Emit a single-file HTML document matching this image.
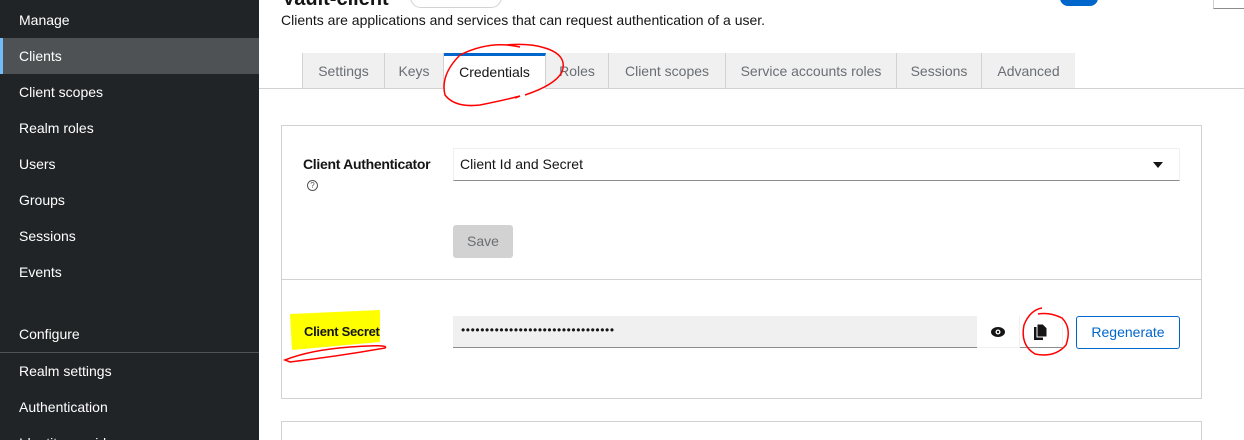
<!DOCTYPE html><html><head><style>
html,body{margin:0;width:1244px;height:440px;overflow:hidden}
body{position:relative;font-family:"Liberation Sans",sans-serif;font-size:14px;background:#fff;color:#151515}
.a{position:absolute}
.side{left:0;top:0;width:259px;height:440px;background:#212427}
.si{position:absolute;left:19px;color:#fff;font-size:14px}
.tab{position:absolute;top:53px;height:35px;background:#f0f0f0;border-right:1px solid #d2d2d2;color:#6a6e73;font-size:14px;line-height:37px;text-align:center;box-sizing:border-box}
</style></head><body>
<div class="a side">
<div class="si" style="top:12px">Manage</div>
<div class="a" style="left:0;top:38px;width:259px;height:36px;background:#4f5255;border-left:3px solid #73bcf7;box-sizing:border-box"></div>
<div class="si" style="top:48px">Clients</div>
<div class="si" style="top:84px">Client scopes</div>
<div class="si" style="top:120px">Realm roles</div>
<div class="si" style="top:156px">Users</div>
<div class="si" style="top:192px">Groups</div>
<div class="si" style="top:228px">Sessions</div>
<div class="si" style="top:264px">Events</div>
<div class="si" style="top:326px">Configure</div>
<div class="a" style="left:0;top:352px;width:259px;height:1px;background:#4f5255"></div>
<div class="si" style="top:363px">Realm settings</div>
<div class="si" style="top:399px">Authentication</div>
<div class="si" style="top:435px">Identity providers</div>
</div>
<div class="a" style="left:282px;top:-12px;font-size:20px;font-weight:bold">Vault-client</div>
<div class="a" style="left:410px;top:-14px;width:90px;height:20px;border:1px solid #d2d2d2;border-radius:12px"></div>
<div class="a" style="left:1060px;top:-10px;width:38px;height:16px;background:#06c;border-radius:10px"></div>
<div class="a" style="left:1213px;top:-2px;width:40px;height:10px;border-bottom:1px solid #8a8d90;border-left:1px solid #d2d2d2"></div>
<div class="a" style="left:281px;top:12px;font-size:14px">Clients are applications and services that can request authentication of a user.</div>
<div class="a" style="left:259px;top:88px;width:985px;height:1px;background:#d2d2d2"></div>
<div class="tab" style="left:302px;width:83px;border-left:1px solid #d2d2d2">Settings</div>
<div class="tab" style="left:385px;width:59px">Keys</div>
<div class="tab" style="left:444px;width:102px;background:#fff;color:#151515;border-top:3px solid #06c;line-height:33px;height:36px">Credentials</div>
<div class="tab" style="left:546px;width:63px">Roles</div>
<div class="tab" style="left:609px;width:117px">Client scopes</div>
<div class="tab" style="left:726px;width:171px">Service accounts roles</div>
<div class="tab" style="left:897px;width:85px">Sessions</div>
<div class="tab" style="left:982px;width:93px;border-right:none">Advanced</div>
<div class="a" style="left:281px;top:125px;width:919px;height:272px;border:1px solid #d2d2d2"></div>
<div class="a" style="left:281px;top:279px;width:921px;height:1px;background:#d2d2d2"></div>
<div class="a" style="left:281px;top:421px;width:919px;height:30px;border:1px solid #d2d2d2"></div>
<div class="a" style="left:303px;top:156px;font-weight:bold;font-size:14px;letter-spacing:-0.3px">Client Authenticator</div>
<div class="a" style="left:307px;top:180px;width:9px;height:9px;border:1px solid #555;border-radius:50%;font-size:8px;line-height:9px;text-align:center;color:#555">?</div>
<div class="a" style="left:453px;top:148px;width:725px;height:31px;border:1px solid #f0f0f0;border-bottom:1px solid #8a8d90"></div>
<div class="a" style="left:460px;top:156px">Client Id and Secret</div>
<div class="a" style="left:1153px;top:162px;width:0;height:0;border-left:5px solid transparent;border-right:5px solid transparent;border-top:6px solid #151515"></div>
<div class="a" style="left:453px;top:225px;width:60px;height:33px;background:#d2d2d2;border-radius:3px;color:#6a6e73;text-align:center;line-height:33px">Save</div>
<svg class="a" style="left:280px;top:300px" width="120" height="70"><path d="M10 14 L100 10 L100 42 L12 50 Z" fill="#ffff00"/><path d="M5 60 Q30 50 70 47 Q110 44 105 48 Q60 56 10 62 Z" fill="none" stroke="red" stroke-width="1.5"/></svg>
<div class="a" style="left:304px;top:324px;font-weight:bold;font-size:13px;letter-spacing:-0.3px">Client Secret</div>
<div class="a" style="left:453px;top:316px;width:524px;height:31px;background:#f0f0f0;border-bottom:1px solid #8a8d90"></div>
<div class="a" style="left:461px;top:323px;font-size:12px;letter-spacing:0.6px">••••••••••••••••••••••••••••••••</div>
<div class="a" style="left:977px;top:316px;width:42px;height:31px;border-bottom:1px solid #f0f0f0;border-right:1px solid #f0f0f0"></div>
<svg class="a" style="left:990px;top:326px" width="16" height="12"><ellipse cx="8" cy="6" rx="7" ry="5" fill="#151515"/><circle cx="8" cy="6" r="2.5" fill="#fff"/><circle cx="8" cy="6" r="1.2" fill="#151515"/></svg>
<div class="a" style="left:1020px;top:316px;width:42px;height:31px;border-bottom:1px solid #8a8d90;border-right:1px solid #f0f0f0"></div>
<svg class="a" style="left:1033px;top:323px" width="16" height="18"><rect x="1" y="4" width="9" height="13" fill="#151515"/><path d="M4 1 H10 L14 5 V14 H4 Z" fill="#151515" stroke="#fff" stroke-width="1"/></svg>
<div class="a" style="left:1076px;top:316px;width:102px;height:31px;border:1px solid #06c;border-radius:3px;color:#06c;text-align:center;line-height:31px">Regenerate</div>
<svg class="a" style="left:0;top:0" width="1244" height="440"><path d="M520 47 Q490 40 460 55 Q440 75 445 95 Q455 108 480 105 Q505 100 520 96 L515 98 M525 95 Q555 85 562 72 Q568 55 545 48 Q530 43 505 45" fill="none" stroke="red" stroke-width="1.5"/><path d="M1042 308 Q1030 310 1024 325 Q1020 345 1035 354 Q1055 358 1066 345 Q1072 328 1062 318 Q1050 312 1038 314" fill="none" stroke="red" stroke-width="1.5"/></svg>
</body></html>
